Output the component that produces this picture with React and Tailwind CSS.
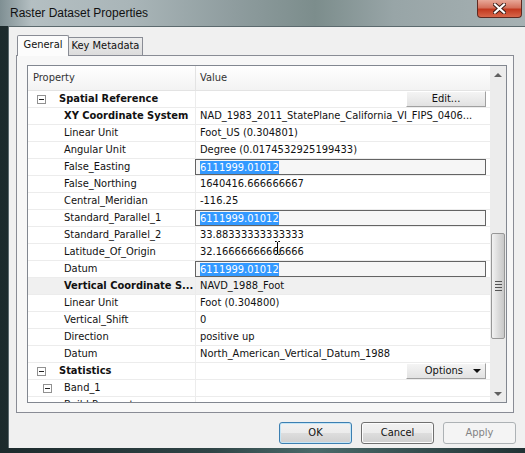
import React from 'react';

const rows = [
  { kind: 'cat', label: 'Spatial Reference', button: 'Edit...' },
  { label: 'XY Coordinate System', bold: true, value: 'NAD_1983_2011_StatePlane_California_VI_FIPS_0406...' },
  { label: 'Linear Unit', value: 'Foot_US (0.304801)' },
  { label: 'Angular Unit', value: 'Degree (0.0174532925199433)' },
  { label: 'False_Easting', value: '6111999.01012', editing: true },
  { label: 'False_Northing', value: '1640416.666666667' },
  { label: 'Central_Meridian', value: '-116.25' },
  { label: 'Standard_Parallel_1', value: '6111999.01012', editing: true },
  { label: 'Standard_Parallel_2', value: '33.88333333333333' },
  { label: 'Latitude_Of_Origin', value: '32.16666666666666', cursor: true },
  { label: 'Datum', value: '6111999.01012', editing: true },
  { label: 'Vertical Coordinate S...', bold: true, value: 'NAVD_1988_Foot', gray: true },
  { label: 'Linear Unit', value: 'Foot (0.304800)' },
  { label: 'Vertical_Shift', value: '0' },
  { label: 'Direction', value: 'positive up' },
  { label: 'Datum', value: 'North_American_Vertical_Datum_1988' },
  { kind: 'cat', label: 'Statistics', button: 'Options' },
  { kind: 'sub', label: 'Band_1' },
  { label: 'Build Parameters', clipped: true },
];

function MinusBox() {
  return (
    <span className="flex h-[9px] w-[9px] shrink-0 items-center justify-center border border-[#919191] bg-white">
      <span className="h-px w-[5px] bg-[#222]" />
    </span>
  );
}

function Row({ r }) {
  const bg = r.gray ? 'bg-[#f0f0f0]' : 'bg-white';
  let prop;
  if (r.kind === 'cat') {
    prop = (
      <div className="flex items-center">
        <span className="ml-[9px]"><MinusBox /></span>
        <span className="ml-[13px] font-bold">{r.label}</span>
      </div>
    );
  } else if (r.kind === 'sub') {
    prop = (
      <div className="flex items-center">
        <span className="ml-[15px]"><MinusBox /></span>
        <span className="ml-[12px]">{r.label}</span>
      </div>
    );
  } else {
    prop = <span className={r.bold ? 'ml-[36px] font-bold' : 'ml-[36px]'}>{r.label}</span>;
  }

  let value = null;
  if (r.button === 'Edit...') {
    value = (
      <div className="ml-auto mr-[4px] flex h-[16px] w-[80px] items-center justify-center border border-t-white border-l-white border-r-[#a0a0a0] border-b-[#a0a0a0] bg-[linear-gradient(#f4f4f4,#e2e2e2)]">
        Edit...
      </div>
    );
  } else if (r.button === 'Options') {
    value = (
      <div className="ml-auto mr-[4px] flex h-[16px] w-[80px] items-center justify-end gap-[10px] border border-t-white border-l-white border-r-[#a0a0a0] border-b-[#a0a0a0] bg-[linear-gradient(#f4f4f4,#e2e2e2)] pr-[4px]">
        <span>Options</span>
        <span className="h-0 w-0 border-x-[4px] border-t-[4px] border-x-transparent border-t-[#111]" />
      </div>
    );
  } else if (r.editing) {
    value = (
      <div className="-ml-px mr-[4px] flex h-full flex-1 items-center border border-[#646464] bg-[#f6f6f6] pl-[4px]">
        <span className="bg-[#3399ff] leading-[13px] text-white">{r.value}</span>
      </div>
    );
  } else if (r.value) {
    value = (
      <span className="relative pl-[4px]">
        {r.value}
        {r.cursor && (
          <svg className="absolute left-[79px] top-[-3px]" width="5" height="14" viewBox="0 0 5 14">
            <path d="M0 0.5h1.5l1 1 1-1h1.5M2.5 1.5v11M0 13.5h1.5l1-1 1 1h1.5" fill="none" stroke="#000" strokeWidth="1" />
          </svg>
        )}
      </span>
    );
  }

  return (
    <div className={`flex h-[17px] shrink-0 border-b border-[#ececec] ${bg}`}>
      <div className="flex w-[168px] shrink-0 items-center border-r border-[#ececec]">{prop}</div>
      <div className="flex min-w-0 flex-1 items-center whitespace-nowrap">{value}</div>
    </div>
  );
}

function Scrollbar() {
  return (
    <div className="flex w-[16px] shrink-0 flex-col bg-[#ececec]">
      <div className="flex h-[17px] items-center justify-center">
        <span className="h-0 w-0 border-x-[4px] border-b-[4px] border-x-transparent border-b-[#606060]" />
      </div>
      <div className="flex flex-1 flex-col pt-[150px]">
        <div className="mx-px flex h-[106px] flex-col items-center justify-center gap-[2px] rounded-[2px] border border-[#979797] bg-[linear-gradient(90deg,#f2f2f2,#dcdcdc_50%,#c8c8c8)]">
          <span className="h-px w-[7px] bg-[#555]" />
          <span className="h-px w-[7px] bg-[#555]" />
          <span className="h-px w-[7px] bg-[#555]" />
          <span className="h-px w-[7px] bg-[#555]" />
        </div>
      </div>
      <div className="flex h-[17px] items-center justify-center">
        <span className="h-0 w-0 border-x-[4px] border-t-[4px] border-x-transparent border-t-[#606060]" />
      </div>
    </div>
  );
}

function DlgButton({ children, variant }) {
  const styles = {
    default: 'border-[#3c7fb1] text-[#111] bg-[linear-gradient(#f2f2f2,#ebebeb_50%,#dddddd_51%,#cfcfcf)] shadow-[inset_0_0_0_1px_#c4e5f6]',
    normal: 'border-[#707070] text-[#111] bg-[linear-gradient(#f2f2f2,#ebebeb_50%,#dddddd_51%,#cfcfcf)] shadow-[inset_0_0_0_1px_#fcfcfc]',
    disabled: 'border-[#adb2b5] text-[#838383] bg-[#f4f4f4]',
  };
  return (
    <div className={`flex h-[22px] w-[73px] items-center justify-center rounded-[3px] border ${styles[variant]}`}>
      {children}
    </div>
  );
}

export default function App() {
  return (
    <div className="flex h-[453px] w-[525px] flex-col overflow-hidden bg-[linear-gradient(90deg,#1c2a2c,#2f4446_40%,#4a6a6a_60%,#213234)] font-['DejaVu_Sans_Condensed','DejaVu_Sans',sans-serif] text-[11px] text-[#111]">
      {/* title bar */}
      <div className="flex h-[26px] shrink-0 items-start justify-between bg-[linear-gradient(90deg,#7f8f93_0%,#b4bfc2_6%,#a9b5b8_25%,#8e9c9e_45%,#7c8d8c_60%,#98a5a7_75%,#a6b1b3_100%)]">
        <span className="ml-[10px] mt-[4px] font-['Liberation_Sans',sans-serif] text-[12px] text-[#111]">Raster Dataset Properties</span>
        <div className="mr-[3px] flex h-[18px] w-[45px] items-center justify-center rounded-b-[4px] border border-t-0 border-[#5e2a22] bg-[linear-gradient(#e8a898,#d4715c_45%,#c2391f_55%,#d8664a)]">
          <svg width="13" height="11" viewBox="0 0 13 11">
            <path d="M2 1.5l9 8M11 1.5l-9 8" stroke="#3b1b16" strokeWidth="4" strokeLinecap="square" />
            <path d="M2 1.5l9 8M11 1.5l-9 8" stroke="#fff" strokeWidth="2.2" strokeLinecap="square" />
          </svg>
        </div>
      </div>

      {/* client */}
      <div className="mb-[5px] ml-[8px] flex flex-1 flex-col border-l border-t border-[#5c6a6e] bg-[#f0f0f0] pl-[7px] pt-[7px]">
        {/* tabs */}
        <div className="flex h-[21px] items-end pl-px">
          <div className="relative z-10 -mb-px flex h-[21px] w-[52px] items-center justify-center rounded-t-[2px] border border-b-0 border-[#898c95] bg-[#fcfcfc] pb-[2px]">
            General
          </div>
          <div className="flex h-[18px] w-[74px] items-center justify-center border border-l-0 border-b-0 border-[#898c95] bg-[linear-gradient(#ececec,#dcdcdc)]">
            Key Metadata
          </div>
        </div>

        {/* panel */}
        <div className="flex h-[358px] w-[498px] flex-col border border-[#898c95] bg-[#f7f7f7] pl-[10px] pt-[9px]">
          <div className="flex h-[338px] w-[480px] border border-[#828790] bg-white">
            <div className="flex min-w-0 flex-1 flex-col overflow-hidden">
              <div className="flex h-[25px] shrink-0 border-b border-[#e3e3e3] bg-[linear-gradient(#ffffff,#f3f3f3)]">
                <div className="flex w-[168px] items-center border-r border-[#e3e3e3] pl-[5px] text-[#333]">Property</div>
                <div className="flex flex-1 items-center pl-[4px] text-[#333]">Value</div>
              </div>
              {rows.map((r, i) => (
                <Row key={i} r={r} />
              ))}
            </div>
            <Scrollbar />
          </div>
        </div>

        {/* buttons */}
        <div className="mt-[9px] flex justify-end gap-[9px] pr-[9px]">
          <DlgButton variant="default">OK</DlgButton>
          <DlgButton variant="normal">Cancel</DlgButton>
          <DlgButton variant="disabled">Apply</DlgButton>
        </div>
      </div>
    </div>
  );
}
